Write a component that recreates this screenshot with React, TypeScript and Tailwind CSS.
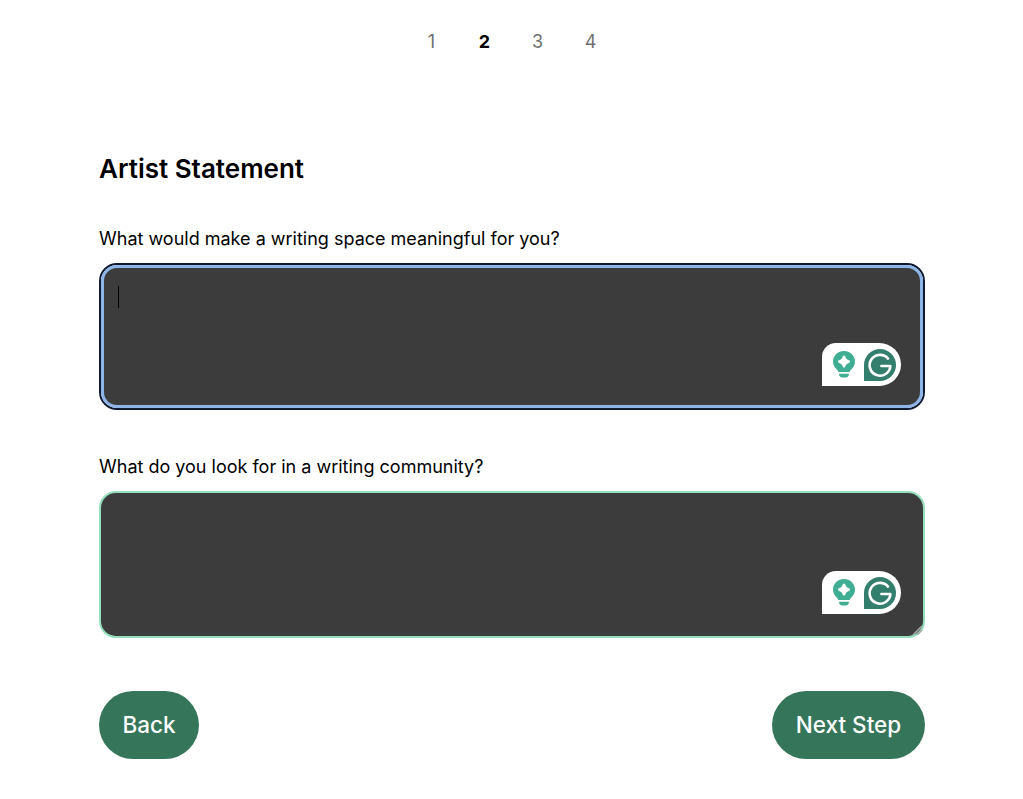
const FONT = "font-['Inter','Noto_Sans',sans-serif]"

function GrammarlyBadge() {
  return (
    <div className="absolute right-[24px] bottom-[24px] flex h-[43px] w-[79px] items-center rounded-tl-[14px] rounded-r-[21.5px] bg-white pl-[11px]">
      <svg width="22" height="27" viewBox="0 0 22 27" fill="none">
        <path
          d="M11 0C5 0 0 4.8 0 10.6c0 3.4 1.7 5.9 3.6 7.7 0.9 0.9 1.5 1.5 1.6 2.6h11.6c0.1-1.1 0.7-1.7 1.6-2.6 1.9-1.8 3.6-4.3 3.6-7.7C22 4.8 17 0 11 0Z"
          fill="#3fae93"
        />
        <path d="M11 4.6c1 0 1.3 1 1.8 2.2 0.5 1.2 1 1.7 2.6 2.2 1 0.3 1.6 0.8 1.6 1.6s-0.6 1.3-1.6 1.6c-1.6 0.5-2.1 1-2.6 2.2-0.5 1.2-0.8 2.2-1.8 2.2s-1.3-1-1.8-2.2c-0.5-1.2-1-1.7-2.6-2.2-1-0.3-1.6-0.8-1.6-1.6s0.6-1.3 1.6-1.6c1.6-0.5 2.1-1 2.6-2.2 0.5-1.2 0.8-2.2 1.8-2.2Z" fill="#fff" />
        <path d="M6 22.8h10c0 2.4-1.4 3.6-3.2 3.6H9.2C7.4 26.4 6 25.2 6 22.8Z" fill="#3fae93" />
      </svg>
      <svg className="ml-[9px]" width="32" height="32" viewBox="0 0 32 32" fill="none">
        <path d="M16 0a16 16 0 0 1 0 32H0V16A16 16 0 0 1 16 0Z" fill="#347e6e" />
        <path
          d="M24 9.6A10.4 10.4 0 1 0 26.4 17H17.4"
          stroke="#fff"
          strokeWidth="2.6"
          strokeLinecap="round"
          strokeLinejoin="round"
        />
      </svg>
    </div>
  )
}

export default function App() {
  return (
    <div className={`${FONT} min-h-[799px] bg-white pr-[98px] pl-[99px] text-black`}>
      <div className="flex h-[83px] items-center justify-center gap-[37px] pr-[2px] text-lg">
        <span className="w-[16px] text-center text-[#6f6f6f]">1</span>
        <span className="w-[16px] text-center font-bold">2</span>
        <span className="w-[16px] text-center text-[#6f6f6f]">3</span>
        <span className="w-[16px] text-center text-[#6f6f6f]">4</span>
      </div>

      <h2 className="mt-[69px] text-[26px] leading-[34px] font-semibold">Artist Statement</h2>

      <label className="mt-[41px] block text-[18px] leading-[24px]">What would make a writing space meaningful for you?</label>
      <div className="relative mt-[12px] h-[147px] rounded-[18px] border-2 border-[#0f1c30]">
        <div className="h-full rounded-[16px] border-[3px] border-[#8fb4e8] bg-[#3c3c3c]" />
        <span className="absolute top-[21px] left-[17px] h-[22px] w-[1px] bg-black" />
        <div className="absolute inset-[-2px]">
          <GrammarlyBadge />
        </div>
      </div>

      <label className="mt-[45px] block text-[18px] leading-[24px]">What do you look for in a writing community?</label>
      <div className="relative mt-[12px] h-[147px]">
        <textarea className="block h-full w-full resize-none rounded-[17px] border-2 border-[#93dfbc] bg-[#3c3c3c]" />
        <GrammarlyBadge />
        <svg className="absolute right-[2px] bottom-[2px]" width="11" height="11" viewBox="0 0 11 11" fill="none">
          <path d="M1 10 10 1M5 10 10 5" stroke="#a8a8a8" strokeWidth="1.6" />
        </svg>
      </div>

      <div className="mt-[53px] flex items-center justify-between">
        <button className="h-[68px] w-[100px] rounded-[34px] bg-[#35755a] text-[22.5px] font-medium text-white">Back</button>
        <button className="h-[68px] w-[153px] rounded-[34px] bg-[#35755a] text-[22.5px] font-medium text-white">Next Step</button>
      </div>
    </div>
  )
}
